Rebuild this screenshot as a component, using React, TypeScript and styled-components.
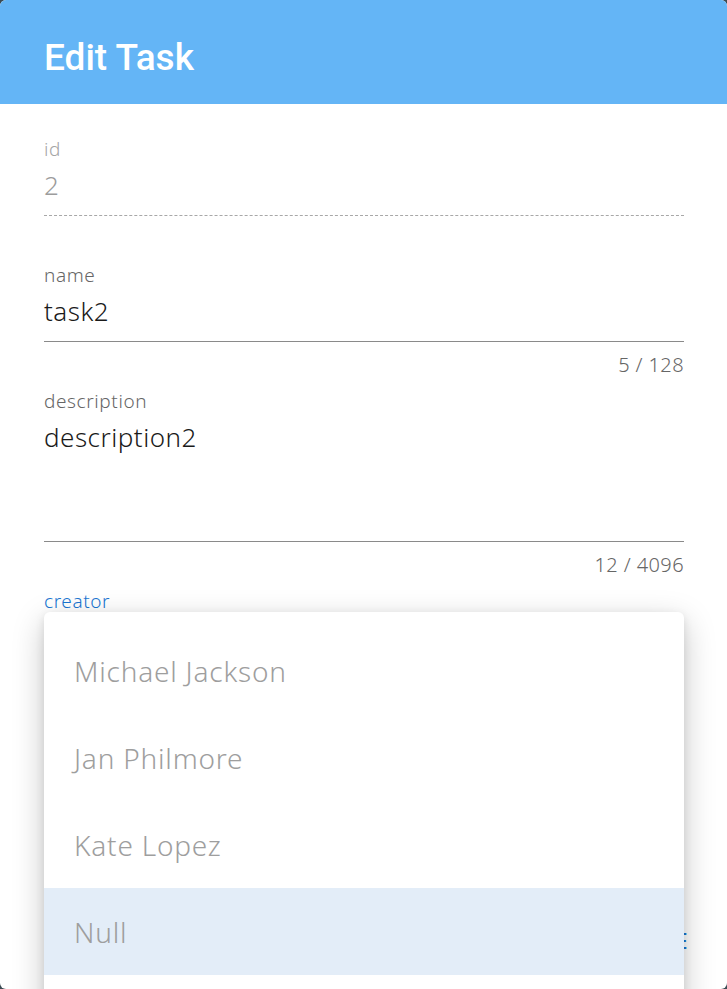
import styled, { createGlobalStyle } from 'styled-components';

const GlobalStyle = createGlobalStyle`
  html, body {
    margin: 0;
    padding: 0;
    background: #3b4b53;
  }
  body {
    font-family: 'Noto Sans', Lato, sans-serif;
  }
`;

type Field = {
  label: string;
  value: string;
  helper?: string;
  disabled?: boolean;
  multiline?: boolean;
};

const fields: Field[] = [
  { label: 'id', value: '2', disabled: true },
  { label: 'name', value: 'task2', helper: '5 / 128' },
  { label: 'description', value: 'description2', helper: '12 / 4096', multiline: true },
];

const creators = ['Michael Jackson', 'Jan Philmore', 'Kate Lopez', 'Null'];

export default function App() {
  return (
    <>
      <GlobalStyle />
      <Dialog>
        <Header>
          <Title>Edit Task</Title>
        </Header>
        <Content>
          {fields.map((f) => (
            <FieldBox key={f.label}>
              <Label $disabled={f.disabled}>{f.label}</Label>
              <Value $disabled={f.disabled} $multiline={f.multiline}>
                {f.value}
              </Value>
              <Underline $disabled={f.disabled} />
              <Helper>{f.helper ?? ''}</Helper>
            </FieldBox>
          ))}
          <FieldBox>
            <Label $focused>creator</Label>
            <Value>Null</Value>
            <Underline $focused />
          </FieldBox>
        </Content>
        <Actions>
          <TextButton>Cancel</TextButton>
          <TextButton>Save</TextButton>
        </Actions>

        <Menu>
          {creators.map((c) => (
            <MenuItem key={c} $selected={c === 'Null'}>
              {c}
            </MenuItem>
          ))}
        </Menu>
      </Dialog>
    </>
  );
}

const Dialog = styled.div`
  position: relative;
  height: 100vh;
  background: #fff;
  border-radius: 6px;
  overflow: hidden;
  display: flex;
  flex-direction: column;
`;

const Header = styled.div`
  height: 104px;
  flex: none;
  background: #64b5f6;
  display: flex;
  align-items: center;
  padding: 10px 44px 0;
  box-sizing: border-box;
`;

const Title = styled.h1`
  margin: 0;
  font-family: Roboto, sans-serif;
  font-weight: 500;
  font-size: 37px;
  color: #fff;
  letter-spacing: 0;
`;

const Content = styled.div`
  flex: 1;
  padding: 33px 43px 0 44px;
  display: flex;
  flex-direction: column;
  gap: 12px;
`;

const FieldBox = styled.div`
  display: flex;
  flex-direction: column;
`;

const Label = styled.div<{ $disabled?: boolean; $focused?: boolean }>`
  font-size: 19px;
  line-height: 24px;
  letter-spacing: 0.6px;
  font-weight: 300;
  color: ${(p) => (p.$focused ? '#1976d2' : p.$disabled ? '#a6a6a6' : '#666')};
`;

const Value = styled.div<{ $disabled?: boolean; $multiline?: boolean }>`
  margin-top: 6px;
  font-size: 26px;
  line-height: 36px;
  letter-spacing: 0.5px;
  font-weight: 300;
  min-height: ${(p) => (p.$multiline ? '110px' : '36px')};
  padding-bottom: 12px;
  color: ${(p) => (p.$disabled ? '#9c9c9c' : '#1a1a1a')};
`;

const Underline = styled.div<{ $disabled?: boolean; $focused?: boolean }>`
  height: 0;
  border-bottom: 1px ${(p) => (p.$disabled ? 'dashed #a8a8a8' : 'solid #8a8a8a')};
  ${(p) => p.$focused && 'border-bottom: 2px solid #1976d2;'}
`;

const Helper = styled.div`
  margin-top: 11px;
  height: 24px;
  font-size: 20px;
  line-height: 24px;
  letter-spacing: 0.4px;
  font-weight: 300;
  color: #666;
  text-align: right;
`;

const Actions = styled.div`
  flex: none;
  display: flex;
  justify-content: flex-end;
  gap: 16px;
  padding: 25px 30px 24px;
`;

const TextButton = styled.button`
  border: none;
  background: none;
  padding: 12px 9px;
  font-family: 'Noto Sans', sans-serif;
  font-size: 21px;
  font-weight: 500;
  text-transform: uppercase;
  letter-spacing: 0.5px;
  color: #1976d2;
  line-height: 24px;
`;

const Menu = styled.div`
  position: absolute;
  left: 44px;
  top: 612px;
  width: 640px;
  height: 420px;
  padding-top: 15px;
  box-sizing: border-box;
  background: #fff;
  border-radius: 6px;
  box-shadow: 0 10px 32px rgba(0, 0, 0, 0.22), 0 3px 10px rgba(0, 0, 0, 0.1);
`;

const MenuItem = styled.div<{ $selected?: boolean }>`
  height: 87px;
  display: flex;
  align-items: center;
  padding-left: 30px;
  font-size: 28px;
  font-weight: 300;
  letter-spacing: 0.8px;
  color: #9e9e9e;
  background: ${(p) => (p.$selected ? '#e3edf8' : 'transparent')};
`;
